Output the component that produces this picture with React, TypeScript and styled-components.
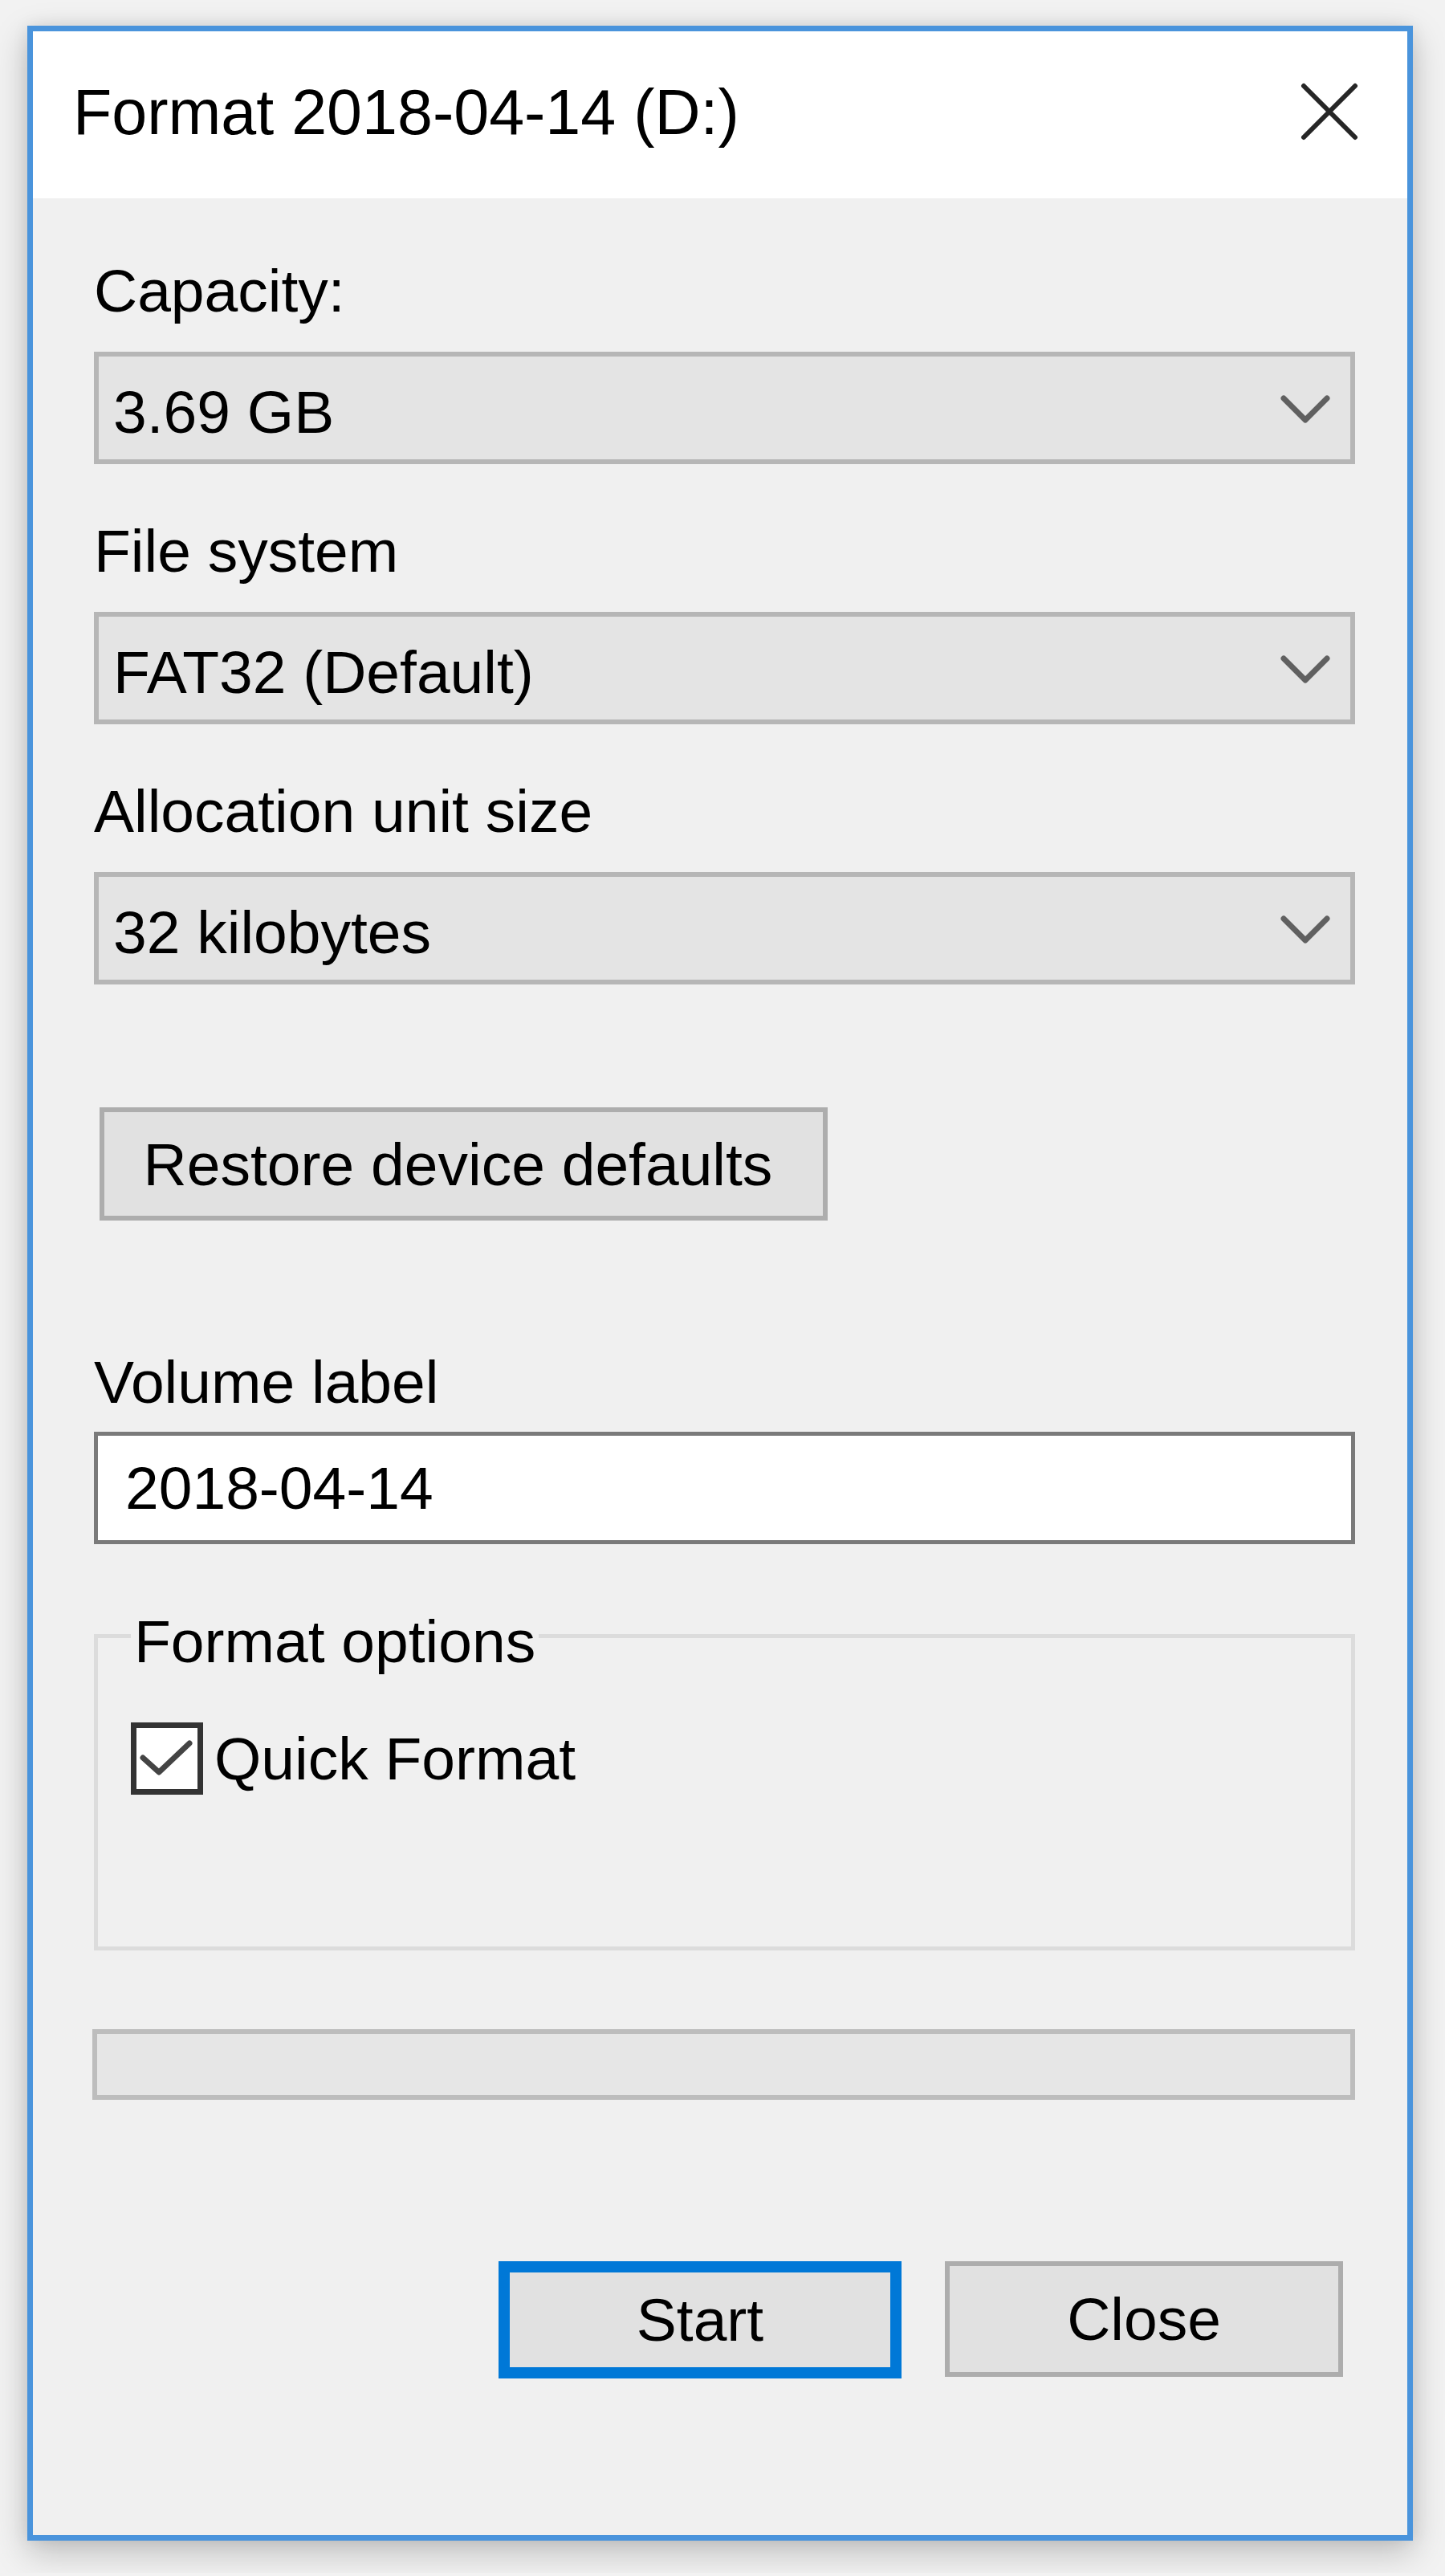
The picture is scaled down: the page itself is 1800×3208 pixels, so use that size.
import React from 'react';
import styled, { createGlobalStyle } from 'styled-components';

const GlobalStyle = createGlobalStyle`
  html, body {
    margin: 0;
    padding: 0;
    background: #f2f2f2;
  }

  body {
    font-family: 'Segoe UI', 'Liberation Sans', Arial, sans-serif;
    color: #000;
  }
`;

const FONT = 75;
const LINE = 78;

const Page = styled.div`
  padding: 32px 0 40px 34px;
`;

const Window = styled.div`
  box-sizing: border-box;
  width: 1726px;
  height: 3132px;
  border: 7px solid #4a94dc;
  display: flex;
  flex-direction: column;
  box-shadow:
    0 14px 40px rgba(0, 0, 0, 0.22),
    0 0 18px rgba(0, 0, 0, 0.08);
`;

const TitleBar = styled.div`
  height: 208px;
  flex: none;
  box-sizing: border-box;
  background: #fff;
  display: flex;
  align-items: center;
  justify-content: space-between;
  padding: 0 61px 8px 50px;
`;

const Title = styled.div`
  font-size: 79px;
  line-height: 79px;
  white-space: nowrap;
`;

const CloseIcon = styled.svg`
  width: 72px;
  height: 72px;
  display: block;
`;

const Body = styled.div`
  flex: 1;
  background: #f0f0f0;
  display: flex;
  flex-direction: column;
  padding: 76px 65px 0 76px;
`;

const FieldList = styled.div`
  display: flex;
  flex-direction: column;
  gap: 69px;
`;

const Field = styled.div`
  display: flex;
  flex-direction: column;
`;

const Label = styled.div<{ $gap?: number }>`
  font-size: ${FONT}px;
  line-height: ${LINE}px;
  height: ${LINE}px;
  margin-bottom: ${(p) => p.$gap ?? 37}px;
  white-space: nowrap;
`;

const Select = styled.div`
  box-sizing: border-box;
  height: 140px;
  background: #e4e4e4;
  border: 6px solid #b6b6b6;
  display: flex;
  align-items: center;
  justify-content: space-between;
  padding: 10px 25px 0 18px;
  font-size: ${FONT}px;
  line-height: ${LINE}px;
`;

const Chevron = styled.svg`
  width: 62px;
  height: 38px;
  display: block;
  margin-top: -6px;
`;

const Button = styled.button<{ $primary?: boolean; $width: number }>`
  box-sizing: border-box;
  width: ${(p) => p.$width}px;
  height: ${(p) => (p.$primary ? 146 : 144)}px;
  background: #e1e1e1;
  border: ${(p) => (p.$primary ? '14px solid #0078d7' : '6px solid #adadad')};
  font-family: inherit;
  font-size: ${FONT}px;
  line-height: ${LINE}px;
  color: #000;
  padding: 0;
  margin: 0;
  display: flex;
  align-items: center;
  justify-content: center;
`;

const RestoreButton = styled(Button)`
  height: 141px;
  margin: 153px 0 0 7px;
  padding-right: 14px;
`;

const VolumeField = styled.div`
  display: flex;
  flex-direction: column;
  margin-top: 162px;
`;

const TextBox = styled.div`
  box-sizing: border-box;
  height: 140px;
  background: #fff;
  border: 5px solid #7a7a7a;
  display: flex;
  align-items: center;
  padding: 0 0 0 34px;
  font-size: ${FONT}px;
  line-height: ${LINE}px;
`;

const GroupBox = styled.fieldset`
  box-sizing: border-box;
  height: 438px;
  margin: 68px 0 0;
  border: 5px solid #dcdcdc;
  padding: 62px 0 0 41px;
  min-width: 0;
`;

const Legend = styled.legend`
  font-size: ${FONT}px;
  line-height: ${LINE}px;
  padding: 14px 4px 0;
`;

const CheckRow = styled.label`
  display: flex;
  align-items: center;
  gap: 14px;
  font-size: ${FONT}px;
  line-height: ${LINE}px;
`;

const CheckBox = styled.span`
  box-sizing: border-box;
  width: 90px;
  height: 90px;
  flex: none;
  background: #fff;
  border: 7px solid #333;
  display: flex;
  align-items: center;
  justify-content: center;
`;

const CheckMark = styled.svg`
  width: 68px;
  height: 50px;
  display: block;
`;

const Progress = styled.div`
  box-sizing: border-box;
  height: 88px;
  margin: 98px 0 0 -2px;
  background: #e6e6e6;
  border: 6px solid #bdbdbd;
`;

const Actions = styled.div`
  display: flex;
  justify-content: flex-end;
  gap: 54px;
  margin-top: 201px;
  padding-right: 15px;
`;

const fields = [
  { label: 'Capacity:', value: '3.69 GB' },
  { label: 'File system', value: 'FAT32 (Default)' },
  { label: 'Allocation unit size', value: '32 kilobytes' },
];

export default function App() {
  return (
    <>
      <GlobalStyle />
      <Page>
        <Window>
          <TitleBar>
            <Title>Format 2018-04-14 (D:)</Title>
            <CloseIcon viewBox="0 0 72 72">
              <path d="M4 4 L68 68 M68 4 L4 68" stroke="#262626" strokeWidth="6" strokeLinecap="round" />
            </CloseIcon>
          </TitleBar>

          <Body>
            <FieldList>
              {fields.map((f) => (
                <Field key={f.label}>
                  <Label>{f.label}</Label>
                  <Select>
                    <span>{f.value}</span>
                    <Chevron viewBox="0 0 62 38">
                      <path d="M4 5 L31 32 L58 5" fill="none" stroke="#606060" strokeWidth="7" strokeLinecap="round" strokeLinejoin="round" />
                    </Chevron>
                  </Select>
                </Field>
              ))}
            </FieldList>

            <div>
              <RestoreButton $width={907}>Restore device defaults</RestoreButton>
            </div>

            <VolumeField>
              <Label $gap={23}>Volume label</Label>
              <TextBox>2018-04-14</TextBox>
            </VolumeField>

            <GroupBox>
              <Legend>Format options</Legend>
              <CheckRow>
                <CheckBox>
                  <CheckMark viewBox="0 0 68 50">
                    <path d="M4 24 L24 42 L62 6" fill="none" stroke="#444" strokeWidth="7" strokeLinecap="round" strokeLinejoin="round" />
                  </CheckMark>
                </CheckBox>
                Quick Format
              </CheckRow>
            </GroupBox>

            <Progress />

            <Actions>
              <Button $primary $width={502}>Start</Button>
              <Button $width={496}>Close</Button>
            </Actions>
          </Body>
        </Window>
      </Page>
    </>
  );
}
